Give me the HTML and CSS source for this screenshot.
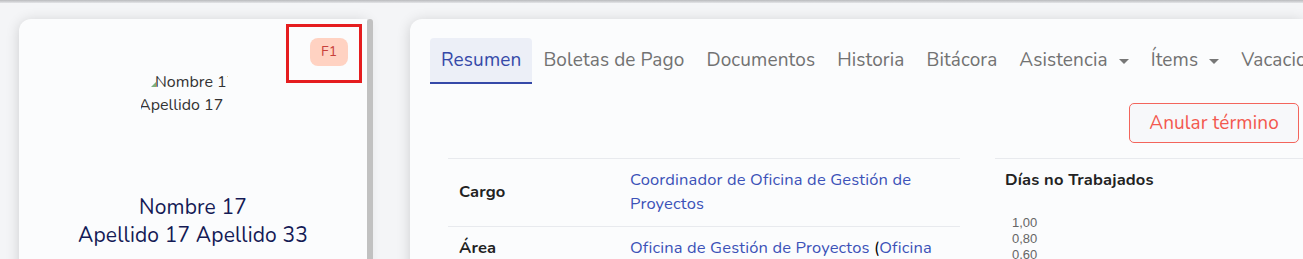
FILE: index.html
```html
<!DOCTYPE html>
<html lang="es">
<head>
    <meta charset="UTF-8">
    <meta name="viewport" content="width=device-width, initial-scale=1.0">
    <title>Ficha del trabajador</title>
    <link rel="stylesheet" href="styles.css">
</head>
<body>
    <div class="topbar"></div>

    <div class="page">
        <div class="profile-card">
            <div class="badge-mark">
                <span class="badge">F1</span>
            </div>
            <div class="photo">
                <div class="photo-alt">
                    <span class="alt-line first"><span class="broken"></span>Nombre 17</span>
                    <span class="alt-line second">Apellido 17</span>
                </div>
            </div>
            <h2 class="person-name">Nombre 17<br>Apellido 17 Apellido 33</h2>
            <div class="scrollbar"></div>
        </div>

        <div class="main-card">
            <ul class="tabs">
                <li class="tab active">Resumen</li>
                <li class="tab">Boletas de Pago</li>
                <li class="tab">Documentos</li>
                <li class="tab">Historia</li>
                <li class="tab">Bitácora</li>
                <li class="tab">Asistencia <span class="caret"></span></li>
                <li class="tab">Ítems <span class="caret"></span></li>
                <li class="tab">Vacaciones</li>
            </ul>

            <div class="actions">
                <button class="btn-outline-danger">Anular término</button>
            </div>

            <div class="summary">
                <table class="info-table">
                    <colgroup>
                        <col class="col-label">
                        <col>
                    </colgroup>
                    <tr>
                        <th>Cargo</th>
                        <td><a href="#">Coordinador de Oficina de Gestión de Proyectos</a></td>
                    </tr>
                    <tr>
                        <th>Área</th>
                        <td><a href="#">Oficina de Gestión de Proyectos</a> (<a href="#">Oficina</a></td>
                    </tr>
                </table>

                <div class="chart-box">
                    <h3>Días no Trabajados</h3>
                    <div class="axis">
                        <span>1,00</span>
                        <span>0,80</span>
                        <span>0,60</span>
                    </div>
                </div>
            </div>
        </div>
    </div>
</body>
</html>
```

FILE: styles.css
```css
body {
    margin: 0;
    font-family: "Nunito", "Lato", "Noto Sans", sans-serif;
    background: #f4f5f7;
    overflow: hidden;
}
.topbar {
    height: 3px;
    background: linear-gradient(#b9babd, #e4e5e8);
}
.page {
    display: flex;
    gap: 43px;
    padding: 16px 0 0 19px;
}

/* left card */
.profile-card {
    position: relative;
    width: 348px;
    flex-shrink: 0;
    height: 300px;
    background: #fbfcfd;
    border-radius: 12px 0 0 0;
    box-shadow: 0 2px 14px rgba(0, 0, 0, 0.16);
}
.scrollbar {
    position: absolute;
    top: 0;
    right: -6px;
    width: 6px;
    height: 100%;
    background: #c1c1c1;
    border-radius: 3px 3px 0 0;
}
.badge-mark {
    position: absolute;
    top: 5px;
    right: 5px;
    width: 70px;
    height: 53px;
    border: 3px solid #e51d1f;
}
.badge {
    position: absolute;
    top: 11px;
    right: 11px;
    width: 38px;
    height: 28px;
    line-height: 28px;
    text-align: center;
    border-radius: 8px;
    background: #ffd2c2;
    color: #c8403a;
    font-size: 14px;
}
.photo {
    padding: 52px 0 0 122px;
    height: 110px;
}
.photo-alt {
    width: 87px;
    height: 48px;
    overflow: hidden;
    font-size: 16px;
    line-height: 23px;
    color: #333;
    white-space: nowrap;
}
.alt-line {
    display: block;
}
.alt-line.first {
    margin-left: 10px;
}
.alt-line.second {
    margin-left: -2px;
}
.broken {
    display: inline-block;
    width: 0;
    height: 0;
    margin-right: -1px;
    border-bottom: 5px solid #7fb07f;
    border-left: 5px solid transparent;
}
.person-name {
    margin: 12px 0 0;
    text-align: center;
    font-size: 21px;
    letter-spacing: 0.15px;
    font-weight: 400;
    line-height: 28px;
    color: #141a55;
}

/* right card */
.main-card {
    flex: 1;
    height: 300px;
    background: #fbfcfd;
    border-radius: 12px 0 0 0;
    box-shadow: 0 2px 14px rgba(0, 0, 0, 0.16);
    padding: 19px 0 0 20px;
    overflow: hidden;
}
.tabs {
    display: flex;
    list-style: none;
    margin: 0;
    padding: 0;
    white-space: nowrap;
}
.tab {
    padding: 0 11px;
    height: 44px;
    line-height: 44px;
    font-size: 19px;
    letter-spacing: 0.12px;
    color: #727272;
    border-bottom: 2px solid transparent;
}
.tab.active {
    background: #eceff7;
    color: #3549a8;
    border-bottom-color: #3549a8;
    border-radius: 4px 4px 0 0;
}
.caret {
    display: inline-block;
    margin-left: 6px;
    vertical-align: middle;
    border-top: 5px solid #777;
    border-left: 5px solid transparent;
    border-right: 5px solid transparent;
}
.actions {
    display: flex;
    justify-content: flex-end;
    padding: 19px 4px 0 0;
}
.btn-outline-danger {
    width: 170px;
    height: 40px;
    font-family: inherit;
    font-size: 19px;
    letter-spacing: 0.1px;
    color: #f3584f;
    background: #f7f8fa;
    border: 1px solid #f3655c;
    border-radius: 5px;
}
.summary {
    display: flex;
    gap: 35px;
    padding: 15px 0 0 18px;
}
.info-table {
    width: 512px;
    table-layout: fixed;
    border-collapse: collapse;
    font-size: 16.5px;
    letter-spacing: 0.15px;
}
.info-table .col-label {
    width: 171px;
}
.info-table th, .info-table td {
    border-top: 1px solid #e8eaee;
    text-align: left;
    vertical-align: middle;
    padding: 9px 11px 10px;
    line-height: 24px;
}
.info-table th {
    color: #222;
    font-weight: 700;
}
.info-table a {
    color: #3c52b8;
    text-decoration: none;
}
.chart-box {
    flex: 1;
    border-top: 1px solid #e8eaee;
    padding: 9px 10px 0 10px;
}
.chart-box h3 {
    margin: 0;
    font-size: 16.5px;
    letter-spacing: 0.15px;
    font-weight: 700;
    color: #222;
    line-height: 24px;
}
.axis {
    display: flex;
    flex-direction: column;
    padding: 23px 0 0 7px;
    font-family: "Liberation Sans", Arial, sans-serif;
    font-size: 13px;
    line-height: 16px;
    color: #666;
}
```
